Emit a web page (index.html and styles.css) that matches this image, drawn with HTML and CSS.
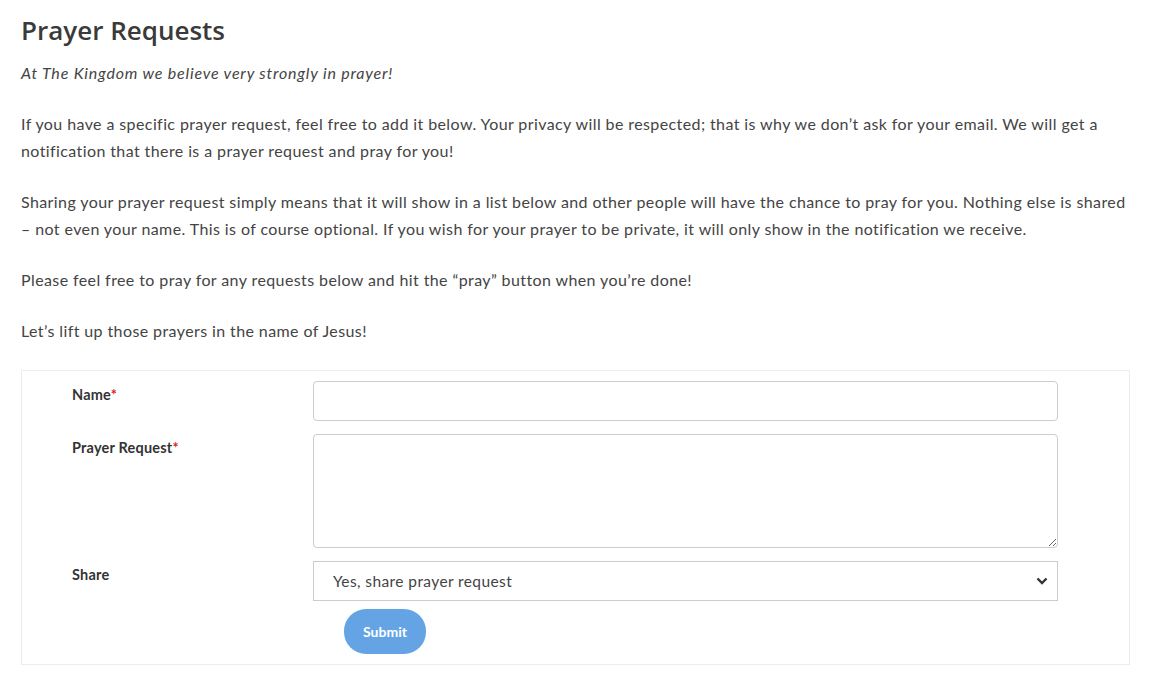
FILE: index.html
```html
<!DOCTYPE html>
<html>
<head>
<meta charset="utf-8">
<title>Prayer Requests</title>
<link rel="stylesheet" href="styles.css">
</head>
<body>
<div class="entry">
  <h2 class="entry-title">Prayer Requests</h2>
  <p><em>At The Kingdom we believe very strongly in prayer!</em></p>
  <p>If you have a specific prayer request, feel free to add it below. Your privacy will be respected; that is why we don&rsquo;t ask for your email. We will get a notification that there is a prayer request and pray for you!</p>
  <p>Sharing your prayer request simply means that it will show in a list below and other people will have the chance to pray for you. Nothing else is shared &ndash; not even your name. This is of course optional. If you wish for your prayer to be private, it will only show in the notification we receive.</p>
  <p>Please feel free to pray for any requests below and hit the &ldquo;pray&rdquo; button when you&rsquo;re done!</p>
  <p>Let&rsquo;s lift up those prayers in the name of Jesus!</p>

  <form class="prayer-form" onsubmit="return false">
    <div class="row">
      <label class="lbl" for="p_name">Name<span class="req">*</span></label>
      <input class="field" type="text" id="p_name" name="p_name">
    </div>
    <div class="row">
      <label class="lbl" for="p_req">Prayer Request<span class="req">*</span></label>
      <textarea class="field area" id="p_req" name="p_req"></textarea>
    </div>
    <div class="row">
      <label class="lbl" for="p_share">Share</label>
      <div class="select-wrap">
        <select class="field select" id="p_share" name="p_share">
          <option>Yes, share prayer request</option>
          <option>No, keep it private</option>
        </select>
        <svg class="chev" width="12" height="8" viewBox="0 0 12 8"><path d="M1.5 1.5 L6 6 L10.5 1.5" fill="none" stroke="#333" stroke-width="2.4"/></svg>
      </div>
    </div>
    <div class="actions">
      <button class="button" type="submit">Submit</button>
    </div>
  </form>
</div>
</body>
</html>
```

FILE: styles.css
```css
body {
  margin: 0;
  background: #fff;
  font-family: Lato, "Noto Sans", sans-serif;
  font-size: 16px;
  letter-spacing: 0.4px;
  color: #444;
}
.entry { padding: 11px 21px 20px 21px; }
.entry-title {
  font-family: "Open Sans", sans-serif;
  font-weight: 600;
  font-size: 26px;
  letter-spacing: 0;
  color: #3a3a3a;
  margin: 0 0 10px 0;
  line-height: 38px;
}
.entry p { margin: 0 0 24px 0; line-height: 27px; }
.entry em { letter-spacing: 0.8px; }

.prayer-form {
  border: 1px solid #ececec;
  margin-top: 26px;
  padding: 10px 71px 10px 50px;
}
.row {
  display: grid;
  grid-template-columns: 241px 1fr;
  margin-bottom: 13px;
}
.lbl {
  font-size: 14.5px;
  font-weight: 700;
  letter-spacing: 0.2px;
  color: #333;
  padding-top: 5px;
}
.req { color: #d22; }
.field {
  box-sizing: border-box;
  width: 100%;
  height: 40px;
  border: 1px solid #ccc;
  border-radius: 4px;
  font-family: inherit;
  font-size: 15.5px;
  letter-spacing: 0.4px;
  color: #444;
  background: #fff;
  padding: 0 19px;
}
.area { height: 114px; padding: 8px 12px; resize: vertical; }
.select-wrap { position: relative; }
.select {
  border-radius: 0;
  -webkit-appearance: none;
  appearance: none;
  height: 40px;
}
.chev { position: absolute; right: 10px; top: 16px; pointer-events: none; }
.actions { padding-left: 272px; margin-top: -5px; }
.button {
  background: #64a4e5;
  color: #fff;
  font-family: inherit;
  font-weight: 700;
  font-size: 14px;
  letter-spacing: 0;
  border: 0;
  border-radius: 22px;
  width: 82px;
  height: 45px;
}
```
